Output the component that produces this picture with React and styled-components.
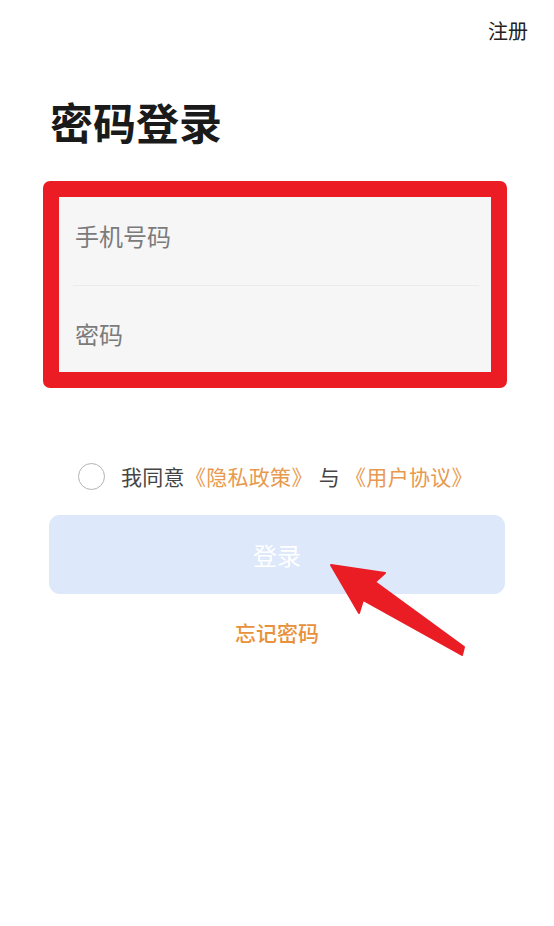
import React, { useState } from "react";
import styled, { createGlobalStyle } from "styled-components";

const GlobalStyle = createGlobalStyle`
  html, body {
    margin: 0;
    padding: 0;
    background: #ffffff;
  }
  body {
    font-family: "Noto Sans CJK SC", "Noto Sans", sans-serif;
    color: #1c1c1c;
  }
  * {
    box-sizing: border-box;
  }
`;

const App = () => {
  const [phone, setPhone] = useState("");
  const [password, setPassword] = useState("");
  const [agreed, setAgreed] = useState(false);

  return (
    <PageStyled>
      <GlobalStyle />
      <TopBarStyled>
        <RegisterLink>注册</RegisterLink>
      </TopBarStyled>

      <TitleStyled>密码登录</TitleStyled>

      <HighlightStyled>
        <PanelStyled>
          <FieldStyled divider rowHeight={100}>
            <InputStyled
              placeholder="手机号码"
              value={phone}
              onChange={e => setPhone(e.target.value)}
            />
          </FieldStyled>
          <FieldStyled rowHeight={94}>
            <InputStyled
              type="password"
              placeholder="密码"
              value={password}
              onChange={e => setPassword(e.target.value)}
            />
          </FieldStyled>
        </PanelStyled>
      </HighlightStyled>

      <AgreeRowStyled>
        <CheckStyled
          type="button"
          checked={agreed}
          onClick={() => setAgreed(!agreed)}
        />
        <AgreeTextStyled>
          我同意<LinkStyled>《隐私政策》</LinkStyled>
          <AndStyled>与</AndStyled>
          <LinkStyled>《用户协议》</LinkStyled>
        </AgreeTextStyled>
      </AgreeRowStyled>

      <LoginButton type="button">登录</LoginButton>

      <ForgotStyled>忘记密码</ForgotStyled>

      {/* annotation arrow */}
      <ArrowStyled width="554" height="926" viewBox="0 0 554 926">
        <polygon
          points="331,565 385,573 375,582 464,647 462,655 363,600 359,613"
          fill="#ea1d25"
          stroke="#ea1d25"
          strokeWidth="2"
          strokeLinejoin="round"
        />
      </ArrowStyled>
    </PageStyled>
  );
};

export default App;

// styled
const PageStyled = styled.div`
  position: relative;
  width: 554px;
  min-height: 926px;
  display: flex;
  flex-direction: column;
`;

const TopBarStyled = styled.div`
  display: flex;
  justify-content: flex-end;
  padding: 21px 26px 0 0;
`;

const RegisterLink = styled.span`
  font-size: 20px;
  line-height: 20px;
  color: #222222;
`;

const TitleStyled = styled.h1`
  margin: 59px 0 0 50px;
  font-size: 43px;
  line-height: 43px;
  font-weight: 700;
  color: #1a1a1a;
`;

const HighlightStyled = styled.div`
  margin: 38px 0 0 43px;
  width: 464px;
  border: 16px solid #ec1c24;
  border-radius: 7px;
  overflow: hidden;
`;

const PanelStyled = styled.div`
  margin: -11px 0 -8px;
  background: #f6f6f7;
  display: flex;
  flex-direction: column;
`;

const FieldStyled = styled.div`
  height: ${props => props.rowHeight}px;
  margin: 0 12px 0 14px;
  display: flex;
  align-items: center;
  border-bottom: ${props => (props.divider ? "1px solid #ebebeb" : "none")};
`;

const InputStyled = styled.input`
  flex: 1;
  border: none;
  outline: none;
  background: transparent;
  padding: 0 0 0 2px;
  font-family: "Noto Sans CJK SC", "Noto Sans", sans-serif;
  font-size: 24px;
  color: #333333;
  &::placeholder {
    color: #7b7b7b;
  }
`;

const AgreeRowStyled = styled.div`
  display: flex;
  align-items: center;
  margin: 75px 0 0 78px;
  height: 27px;
`;

const CheckStyled = styled.button`
  width: 27px;
  height: 27px;
  padding: 0;
  border-radius: 50%;
  border: 1.5px solid #b3b3b3;
  background: ${props => (props.checked ? "#e8974a" : "#ffffff")};
  cursor: pointer;
`;

const AgreeTextStyled = styled.div`
  margin-left: 16px;
  font-size: 21px;
  line-height: 27px;
  letter-spacing: 0.3px;
  color: #454545;
  white-space: nowrap;
`;

const LinkStyled = styled.span`
  color: #e8994e;
`;

const AndStyled = styled.span`
  margin: 0 5px 0 6px;
`;

const LoginButton = styled.button`
  margin: 25px 0 0 49px;
  width: 456px;
  height: 79px;
  border: none;
  border-radius: 11px;
  background: #dde8fb;
  color: #ffffff;
  font-family: "Noto Sans CJK SC", "Noto Sans", sans-serif;
  font-size: 24px;
  cursor: pointer;
`;

const ForgotStyled = styled.div`
  margin-top: 28px;
  text-align: center;
  font-size: 21px;
  line-height: 21px;
  font-weight: 500;
  color: #e8913a;
`;

const ArrowStyled = styled.svg`
  position: absolute;
  left: 0;
  top: 0;
  pointer-events: none;
`;
